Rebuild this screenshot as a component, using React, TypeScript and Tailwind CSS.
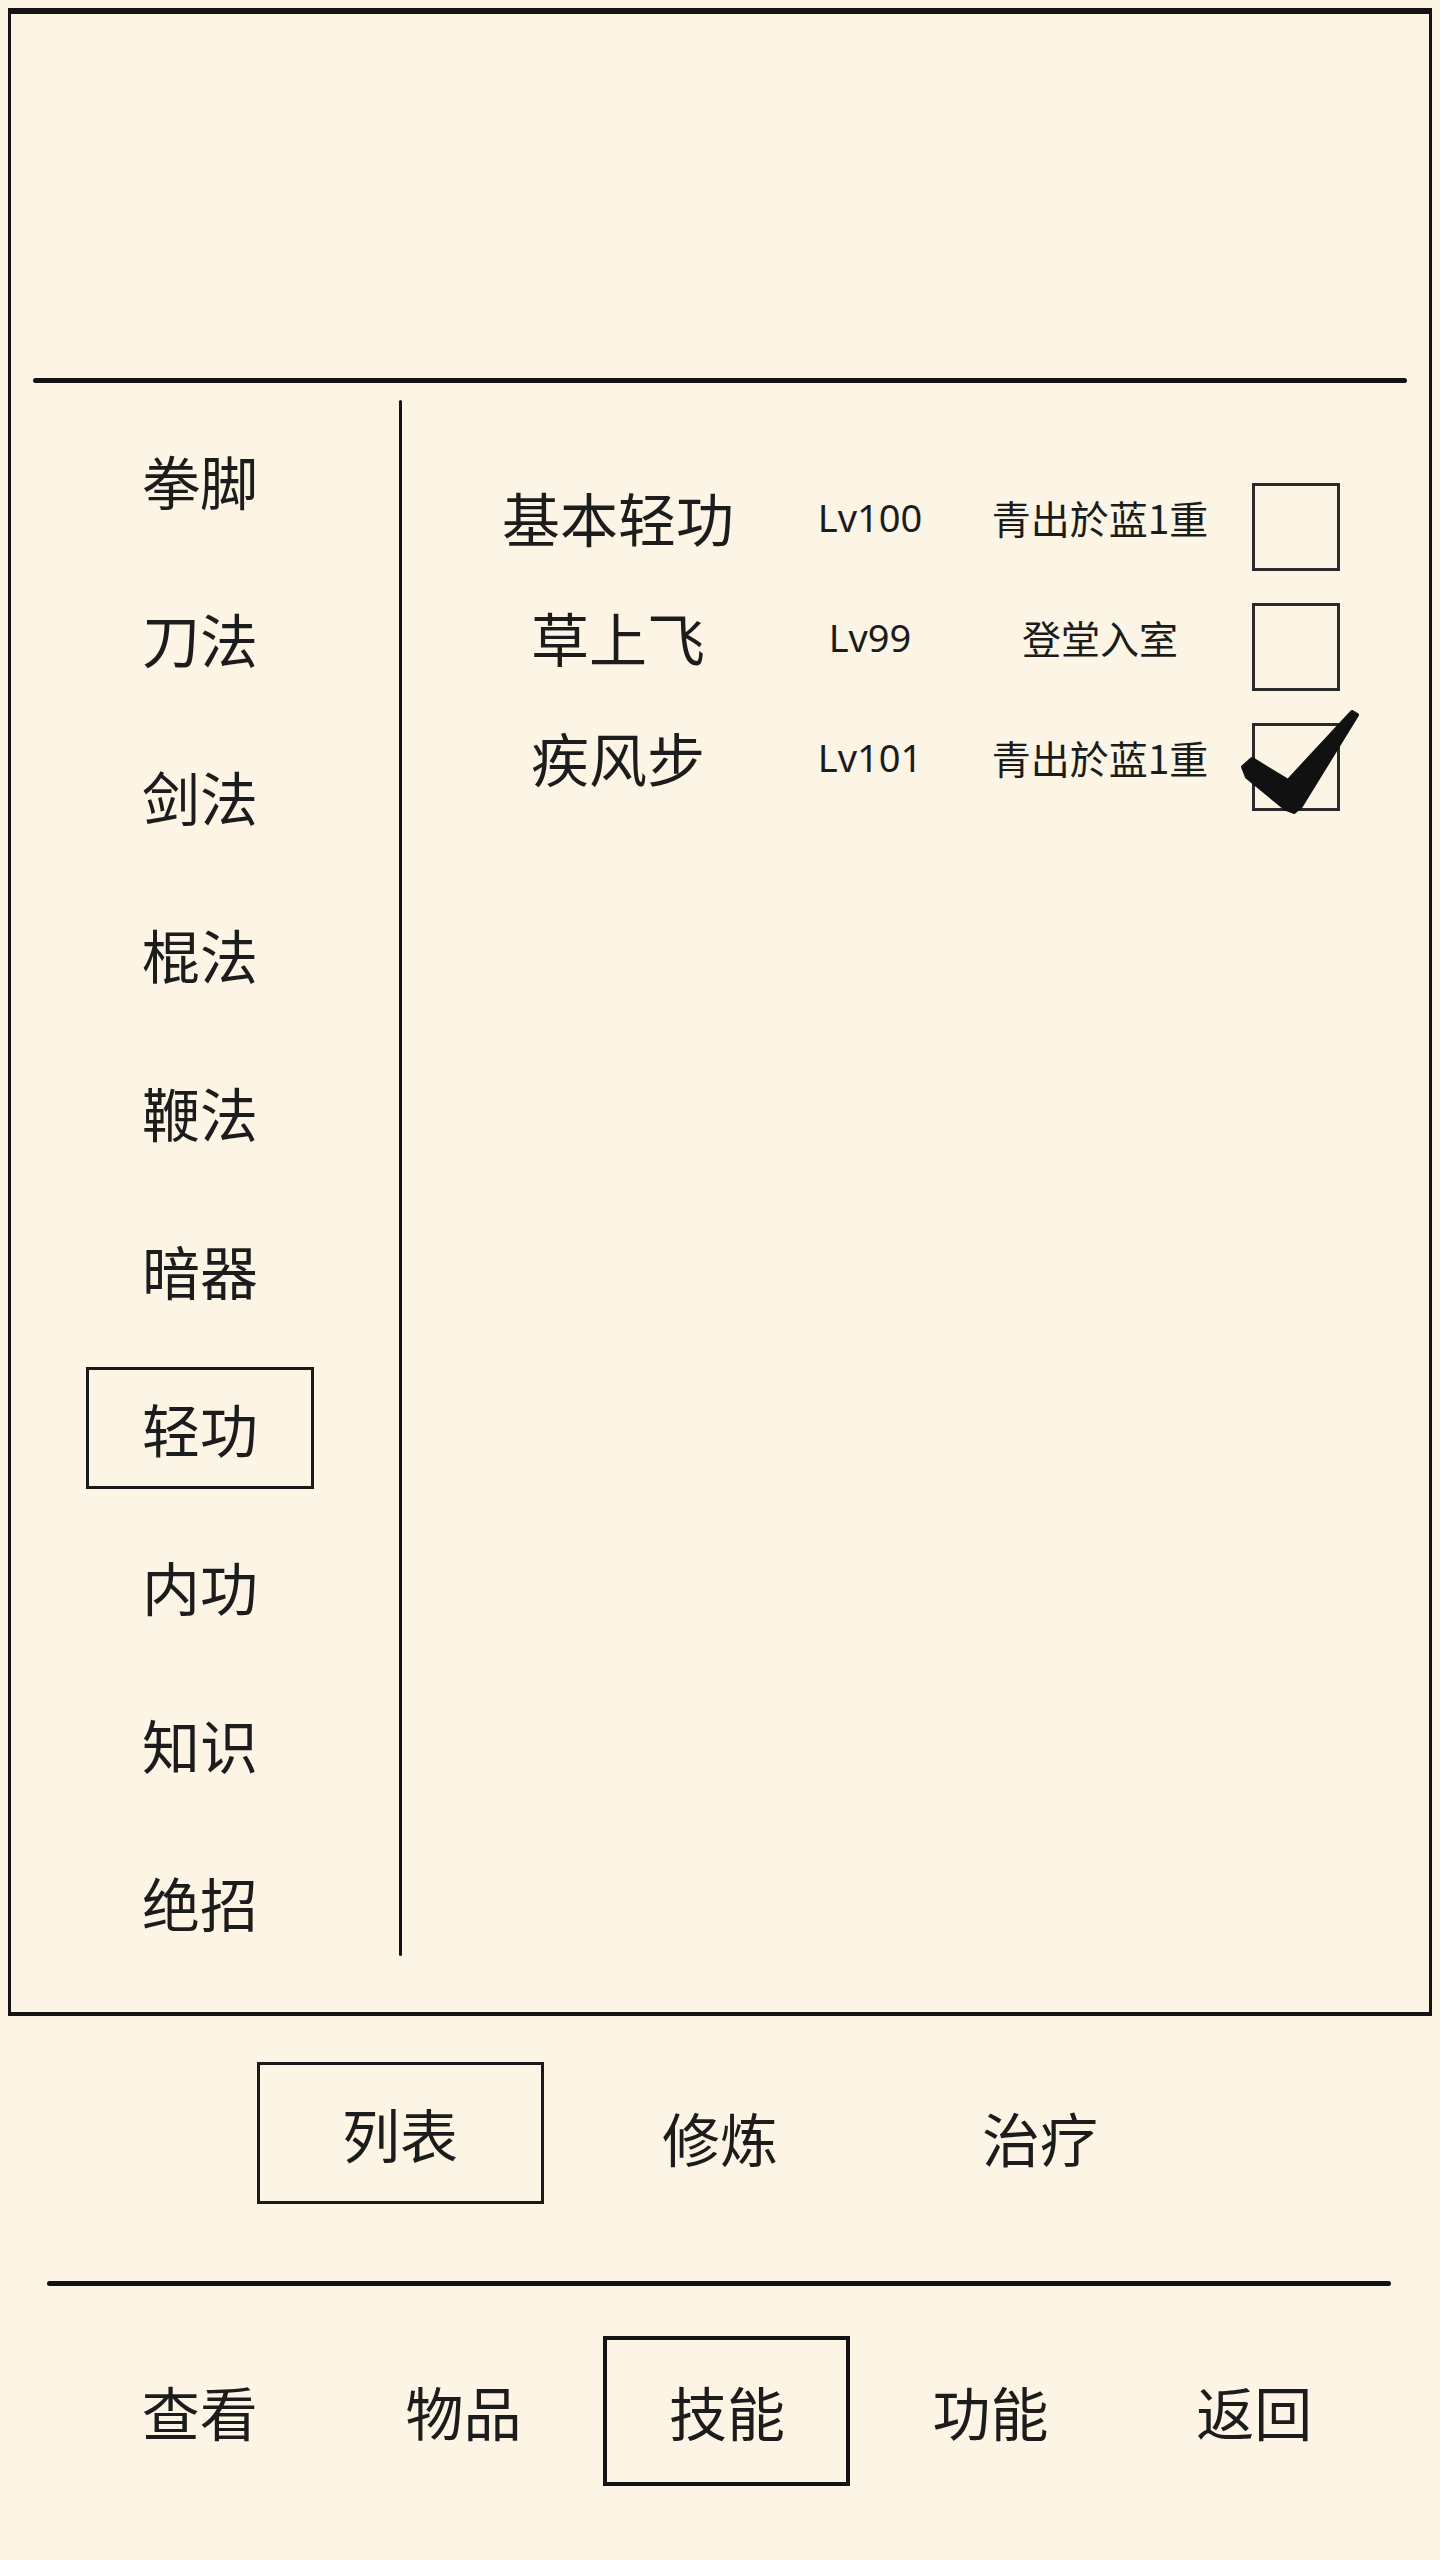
import React from 'react';

const CJK = "font-['Noto_Sans_CJK_SC',sans-serif]";

const menu = ['拳脚', '刀法', '剑法', '棍法', '鞭法', '暗器', '轻功', '内功', '知识', '绝招'];

const skills = [
  { name: '基本轻功', lv: 'Lv100', stage: '青出於蓝1重', on: false },
  { name: '草上飞', lv: 'Lv99', stage: '登堂入室', on: false },
  { name: '疾风步', lv: 'Lv101', stage: '青出於蓝1重', on: true },
];

const tabs = ['列表', '修炼', '治疗'];
const nav = ['查看', '物品', '技能', '功能', '返回'];

const Check: React.FC = () => (
  <svg
    className="absolute left-[-20px] top-[-20px] w-[130px] h-[120px] overflow-visible"
    viewBox="-20 -20 130 120"
  >
    <polygon
      points="-12,41 -3,33 33,55 97,-14 102,-11 46,80 39,86 31,83 -8,51"
      fill="#111"
      stroke="#111"
      strokeWidth="4"
      strokeLinejoin="round"
    />
  </svg>
);

const App: React.FC = () => {
  return (
    <div className={`w-[1440px] min-h-[2560px] bg-[#fcf5e5] text-[#1c1c1c] ${CJK} flex flex-col`}>
      {/* main frame */}
      <div className="mt-[8px] ml-[8px] w-[1424px] h-[2008px] border-t-[6px] border-x-[3px] border-b-[4px] border-[#141414] flex flex-col">
        <div className="h-[364px]" />
        <div className="ml-[22px] mr-[22px] h-[5px] bg-[#141414] rounded-full" />

        <div className="flex flex-1">
          {/* category menu */}
          <div className="w-[388px] pr-[10px] pt-[18px] flex flex-col">
            {menu.map((m) => (
              <div key={m} className="h-[158px] flex items-center justify-center">
                {m === '轻功' ? (
                  <div className="w-[228px] h-[122px] border-[3px] border-[#1a1a1a] flex items-center justify-center text-[58px] leading-none">
                    {m}
                  </div>
                ) : (
                  <span className="text-[58px] leading-none">{m}</span>
                )}
              </div>
            ))}
          </div>

          <div className="w-[3px] mt-[17px] mb-[56px] bg-[#141414] rounded-full" />

          {/* skill list */}
          <div className="flex-1 pt-[74px] pl-[66px] flex flex-col">
            {skills.map((s) => (
              <div key={s.name} className="h-[120px] flex items-center">
                <div className="w-[300px] text-center text-[58px] leading-none">{s.name}</div>
                <div className="w-[204px] text-center text-[38px] leading-none font-['Noto_Sans',sans-serif]">{s.lv}</div>
                <div className="w-[256px] text-center text-[39px] leading-none">{s.stage}</div>
                <div className="ml-[24px] mt-[20px] relative w-[88px] h-[88px] border-[3px] border-[#2a2a2a]">
                  {s.on && <Check />}
                </div>
              </div>
            ))}
          </div>
        </div>
      </div>

      {/* sub tabs */}
      <div className="mt-[46px] ml-[240px] flex">
        {tabs.map((t, i) => (
          <div key={t} className="w-[320px] h-[142px] flex items-center justify-center">
            {i === 0 ? (
              <div className="w-[287px] h-[142px] border-[3px] border-[#1a1a1a] flex items-center justify-center text-[58px] leading-none">
                {t}
              </div>
            ) : (
              <span className="text-[58px] leading-none mt-[8px]">{t}</span>
            )}
          </div>
        ))}
      </div>

      <div className="mt-[77px] ml-[47px] w-[1344px] h-[5px] bg-[#141414] rounded-full" />

      {/* bottom nav */}
      <div className="mt-[50px] ml-[68px] w-[1318px] grid grid-cols-5">
        {nav.map((n) => (
          <div key={n} className="h-[150px] flex items-center justify-center">
            {n === '技能' ? (
              <div className="w-[247px] h-[150px] border-[4px] border-[#141414] flex items-center justify-center text-[58px] leading-none">
                {n}
              </div>
            ) : (
              <span className="text-[58px] leading-none">{n}</span>
            )}
          </div>
        ))}
      </div>
    </div>
  );
};

export default App;
